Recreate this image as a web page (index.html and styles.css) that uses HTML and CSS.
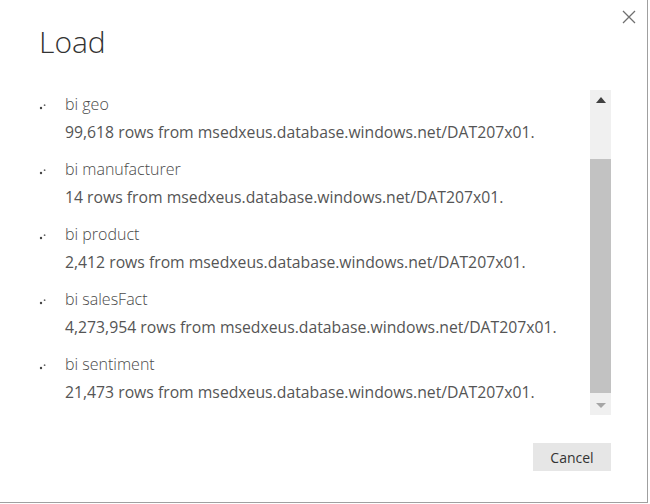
FILE: index.html
```html
<!DOCTYPE html>
<html lang="en">
<head>
  <meta charset="UTF-8">
  <meta name="viewport" content="width=device-width, initial-scale=1.0">
  <title>Load</title>
  <link rel="stylesheet" href="styles.css">
</head>
<body>
  <div class="dialog">
    <div class="header">
      <h1>Load</h1>
      <button class="close" title="Close">
        <svg width="14" height="14" viewBox="0 0 14 14"><path d="M1 1 L13 13 M13 1 L1 13" stroke="#707070" stroke-width="1.3" fill="none"/></svg>
      </button>
    </div>

    <div class="content">
      <ul class="tables">
        <li class="table-item">
          <span class="spinner"><svg width="8" height="7" viewBox="0 0 8 7"><circle cx="2" cy="5" r="1.2" fill="#444"/><circle cx="5.6" cy="2.2" r="0.9" fill="#666"/></svg></span>
          <div class="info">
            <div class="name">bi geo</div>
            <div class="detail">99,618 rows from msedxeus.database.windows.net/DAT207x01.</div>
          </div>
        </li>
        <li class="table-item">
          <span class="spinner"><svg width="8" height="7" viewBox="0 0 8 7"><circle cx="2" cy="5" r="1.2" fill="#444"/><circle cx="5.6" cy="2.2" r="0.9" fill="#666"/></svg></span>
          <div class="info">
            <div class="name">bi manufacturer</div>
            <div class="detail">14 rows from msedxeus.database.windows.net/DAT207x01.</div>
          </div>
        </li>
        <li class="table-item">
          <span class="spinner"><svg width="8" height="7" viewBox="0 0 8 7"><circle cx="2" cy="5" r="1.2" fill="#444"/><circle cx="5.6" cy="2.2" r="0.9" fill="#666"/></svg></span>
          <div class="info">
            <div class="name">bi product</div>
            <div class="detail">2,412 rows from msedxeus.database.windows.net/DAT207x01.</div>
          </div>
        </li>
        <li class="table-item">
          <span class="spinner"><svg width="8" height="7" viewBox="0 0 8 7"><circle cx="2" cy="5" r="1.2" fill="#444"/><circle cx="5.6" cy="2.2" r="0.9" fill="#666"/></svg></span>
          <div class="info">
            <div class="name">bi salesFact</div>
            <div class="detail">4,273,954 rows from msedxeus.database.windows.net/DAT207x01.</div>
          </div>
        </li>
        <li class="table-item">
          <span class="spinner"><svg width="8" height="7" viewBox="0 0 8 7"><circle cx="2" cy="5" r="1.2" fill="#444"/><circle cx="5.6" cy="2.2" r="0.9" fill="#666"/></svg></span>
          <div class="info">
            <div class="name">bi sentiment</div>
            <div class="detail">21,473 rows from msedxeus.database.windows.net/DAT207x01.</div>
          </div>
        </li>
      </ul>

      <div class="scrollbar">
        <div class="sb-btn">
          <svg width="10" height="6" viewBox="0 0 10 6"><path d="M0 6 L5 0 L10 6 Z" fill="#404040"/></svg>
        </div>
        <div class="sb-track">
          <div class="sb-thumb"></div>
        </div>
        <div class="sb-btn">
          <svg width="10" height="5" viewBox="0 0 10 5"><path d="M0 0 L10 0 L5 5 Z" fill="#a6a6a6"/></svg>
        </div>
      </div>
    </div>

    <div class="footer">
      <button class="cancel">Cancel</button>
    </div>
  </div>
</body>
</html>
```

FILE: styles.css
```css
body {
  margin: 0;
  font-family: "Open Sans", "Noto Sans", sans-serif;
  background: #fff;
}
.dialog {
  box-sizing: border-box;
  width: 648px;
  height: 503px;
  border-right: 1px solid #a0a0a0;
  border-bottom: 1px solid #a0a0a0;
  display: flex;
  flex-direction: column;
  padding: 0 36px 0 38px;
}
.header {
  display: flex;
  justify-content: space-between;
  align-items: flex-start;
  height: 90px;
}
h1 {
  margin: 22px 0 0 1px;
  font-size: 30px;
  line-height: 40px;
  font-weight: 300;
  color: #333;
}
.close {
  border: none;
  background: none;
  padding: 0;
  margin: 10px -25px 0 0;
  width: 14px;
  height: 14px;
  display: flex;
}
.content {
  display: flex;
  height: 325px;
}
.tables {
  list-style: none;
  margin: 0;
  padding: 0;
  flex: 1;
}
.table-item {
  display: flex;
  margin-bottom: 9px;
}
.spinner {
  width: 26px;
  padding-top: 3px;
  padding-left: 1px;
}
.info {
  font-size: 15.75px;
  line-height: 28px;
  color: #555;
}
.name {
  font-weight: 300;
  font-size: 16px;
  color: #4a4a4a;
}
.scrollbar {
  width: 21px;
  display: flex;
  flex-direction: column;
  background: #f0f0f0;
}
.sb-btn {
  height: 20px;
  display: flex;
  align-items: center;
  justify-content: center;
}
.sb-track {
  flex: 1;
  display: flex;
  flex-direction: column;
  padding: 49px 0 2px;
}
.sb-thumb {
  flex: 1;
  background: #c2c2c2;
}
.footer {
  display: flex;
  justify-content: flex-end;
  padding-top: 28px;
}
.cancel {
  width: 78px;
  height: 28px;
  border: none;
  background: #e6e6e6;
  font-family: "Open Sans", "Noto Sans", sans-serif;
  font-size: 14px;
  color: #333;
  padding: 0;
}
```
